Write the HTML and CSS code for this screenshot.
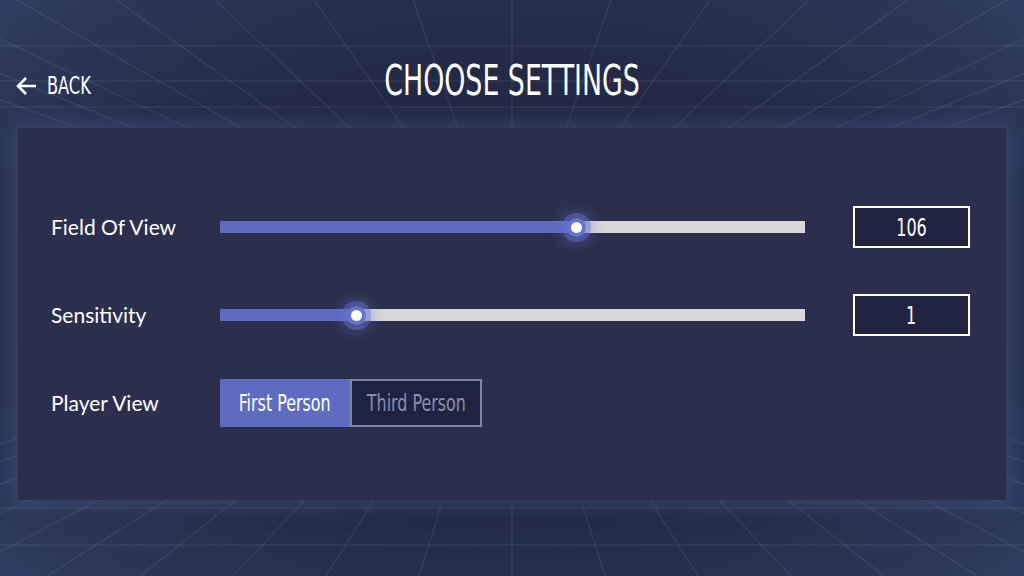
FILE: index.html
```html
<!DOCTYPE html>
<html lang="en">
<head>
  <meta charset="UTF-8" />
  <meta name="viewport" content="width=device-width, initial-scale=1.0"/>
  <title>Choose Settings</title>
  <link rel="stylesheet" href="styles.css">
</head>
<body>

<svg class="room" viewBox="0 0 1024 576" preserveAspectRatio="none" aria-hidden="true">
  <path d="M-280 0L512 282M-181 0L512 282M-82 0L512 282M17 0L512 282M116 0L512 282M215 0L512 282M314 0L512 282M413 0L512 282M512 0L512 282M611 0L512 282M710 0L512 282M809 0L512 282M908 0L512 282M1007 0L512 282M1106 0L512 282M1205 0L512 282M1304 0L512 282"/>
  <path d="M-418 576L512 282M-325 576L512 282M-232 576L512 282M-139 576L512 282M-46 576L512 282M47 576L512 282M140 576L512 282M233 576L512 282M326 576L512 282M419 576L512 282M512 576L512 282M605 576L512 282M698 576L512 282M791 576L512 282M884 576L512 282M977 576L512 282M1070 576L512 282M1163 576L512 282M1256 576L512 282M1349 576L512 282M1442 576L512 282"/>
  <path d="M0 46H1024M0 81H1024M0 107H1024M0 508H1024M0 545H1024"/>
</svg>

<header class="top-bar">
  <a class="back" href="#">
    <svg class="back-icon" viewBox="0 0 24 24" aria-hidden="true">
      <path d="M21 12H4M11 4L3 12l8 8"/>
    </svg>
    <span class="cond">BACK</span>
  </a>
  <h1 class="title"><span class="cond">CHOOSE SETTINGS</span></h1>
</header>

<main class="panel">
  <div class="row">
    <span class="label">Field Of View</span>
    <div class="track">
      <div class="fill" style="width: 61%"></div>
      <span class="thumb" style="left: 61%"></span>
    </div>
    <div class="value"><span class="cond">106</span></div>
  </div>

  <div class="row">
    <span class="label">Sensitivity</span>
    <div class="track">
      <div class="fill" style="width: 23.4%"></div>
      <span class="thumb" style="left: 23.4%"></span>
    </div>
    <div class="value"><span class="cond">1</span></div>
  </div>

  <div class="row">
    <span class="label">Player View</span>
    <div class="toggle">
      <button class="opt active"><span class="cond">First Person</span></button>
      <button class="opt"><span class="cond">Third Person</span></button>
    </div>
  </div>
</main>

</body>
</html>
```

FILE: styles.css
```css
* {
  box-sizing: border-box;
}

html, body {
  height: 100%;
}

body {
  margin: 0;
  position: relative;
  overflow: hidden;
  font-family: 'Lato', sans-serif;
  color: #fff;
  background: radial-gradient(ellipse 75% 85% at 50% 50%, #1e2540 0%, #222a45 45%, #2b3859 80%, #35466c 100%);
}

.room {
  position: absolute;
  top: 0;
  left: 0;
  width: 100%;
  height: 100%;
  z-index: 0;
}

.room path {
  fill: none;
  stroke: rgba(255, 255, 255, 0.07);
  stroke-width: 1.5;
}

.cond {
  display: inline-block;
  white-space: nowrap;
  font-family: 'DejaVu Sans Condensed', 'Liberation Sans', sans-serif;
  transform: scaleX(0.8);
}

/* header */

.top-bar {
  position: relative;
  z-index: 1;
  height: 128px;
  display: flex;
  align-items: center;
  justify-content: center;
  padding-top: 44px;
}

.back {
  position: absolute;
  left: 15px;
  top: 74px;
  display: flex;
  align-items: center;
  gap: 8px;
  color: #fff;
  text-decoration: none;
  font-size: 24px;
  line-height: 24px;
}

.back .cond {
  transform: scaleX(0.75);
  transform-origin: left center;
}

.back-icon {
  width: 24px;
  height: 24px;
  fill: none;
  stroke: #fff;
  stroke-width: 2.6;
}

.title {
  margin: 0;
  font-weight: normal;
  font-size: 42px;
  line-height: 42px;
  margin-bottom: 12px;
}

.title .cond {
  transform: scaleX(0.71);
}

/* panel */

.panel {
  position: relative;
  z-index: 1;
  margin: 0 18px;
  height: 372px;
  background: #2b2f4d;
  box-shadow: 0 0 18px 4px rgba(70, 90, 140, 0.55);
  padding: 75px 36px 0 33px;
  display: flex;
  flex-direction: column;
  gap: 40px;
}

.row {
  display: flex;
  align-items: center;
  height: 48px;
}

.label {
  width: 169px;
  font-size: 21px;
  padding-bottom: 2px;
}

.track {
  position: relative;
  width: 585px;
  height: 12px;
  background: #d7d7d9;
}

.fill {
  height: 100%;
  background: #5d6bc0;
}

.thumb {
  position: absolute;
  top: 50%;
  width: 11px;
  height: 11px;
  margin: -5.5px 0 0 -5.5px;
  border-radius: 50%;
  background: #fff;
  box-shadow:
    0 0 0 4px #6573cf,
    0 0 0 9px rgba(101, 115, 207, 0.45),
    0 0 8px 14px rgba(101, 115, 207, 0.2);
}

.value {
  margin-left: 48px;
  width: 117px;
  height: 42px;
  border: 2px solid #fff;
  background: #20233f;
  display: flex;
  align-items: center;
  justify-content: center;
  font-size: 25px;
}

.value .cond {
  transform: scaleX(0.71);
}

.toggle {
  display: flex;
  height: 48px;
}

.opt {
  border: none;
  margin: 0;
  padding: 0;
  height: 48px;
  font-size: 23px;
  color: #fff;
  cursor: pointer;
}

.opt .cond {
  transform: scaleX(0.77);
}

.opt.active {
  width: 130px;
  background: #5d6bc0;
}

.opt:not(.active) {
  width: 132px;
  background: #20233f;
  border: 2px solid #7f85a8;
  color: #8a8fb0;
}
```
